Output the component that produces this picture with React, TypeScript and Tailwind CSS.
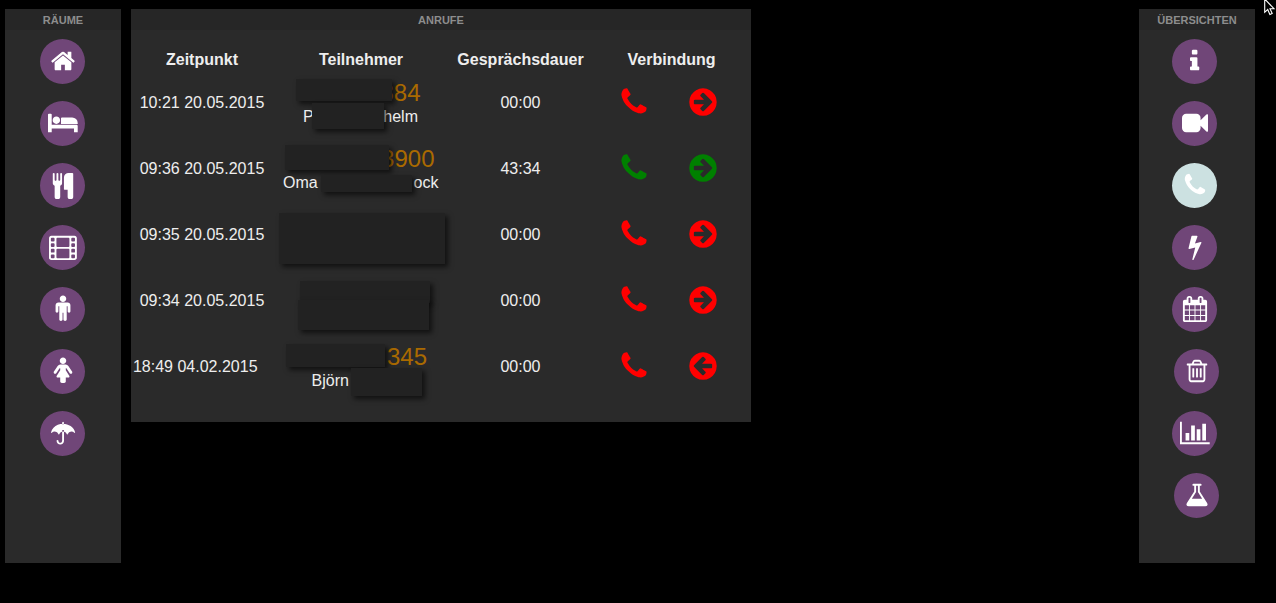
import React from "react";

type Glyph = { w: number; d: string };

const GLYPHS: Record<string, Glyph> = {
  home: { w: 1792, d: "M1472 992v480q0 26-19 45t-45 19h-384v-384h-256v384h-384q-26 0-45-19t-19-45v-480q0-1 .5-3t.5-3l575-474 575 474q1 2 1 6zm223-69l-62 74q-8 9-21 11h-3q-13 0-21-7l-692-577-692 577q-12 8-24 7-13-2-21-11l-62-74q-8-10-7-23.5t11-21.5l719-599q32-26 76-26t76 26l244 204v-195q0-14 9-23t23-9h192q14 0 23 9t9 23v408l219 182q10 8 11 21.5t-7 23.5z" },
  bed: { w: 2048, d: "M256 1024h1728q26 0 45 19t19 45v448h-256v-256h-1536v256h-256v-1216q0-26 19-45t45-19h128q26 0 45 19t19 45v704zm576-320q0-106-75-181t-181-75-181 75-75 181 75 181 181 75 181-75 75-181zm1216 256v-64q0-159-112.5-271.5t-271.5-112.5h-704q-26 0-45 19t-19 45v384h1152z" },
  cutlery: { w: 1792, d: "M832 128v640q0 61-35.5 111t-92.5 70v779q0 52-38 90t-90 38h-128q-52 0-90-38t-38-90v-779q-57-20-92.5-70t-35.5-111v-640q0-26 19-45t45-19 45 19 19 45v416q0 26 19 45t45 19 45-19 19-45v-416q0-26 19-45t45-19 45 19 19 45v416q0 26 19 45t45 19 45-19 19-45v-416q0-26 19-45t45-19 45 19 19 45zm768 0v1600q0 52-38 90t-90 38h-128q-52 0-90-38t-38-90v-512h-224q-13 0-22.5-9.5t-9.5-22.5v-800q0-132 94-226t226-94h256q26 0 45 19t19 45z" },
  film: { w: 1920, d: "M160 128h1600q66 0 113 47t47 113v1344q0 66-47 113t-113 47h-1600q-66 0-113-47t-47-113v-1344q0-66 47-113t113-47z M192 256q-64 0-64 64v128q0 64 64 64h128q64 0 64-64v-128q0-64-64-64z M192 640q-64 0-64 64v128q0 64 64 64h128q64 0 64-64v-128q0-64-64-64z M192 1024q-64 0-64 64v128q0 64 64 64h128q64 0 64-64v-128q0-64-64-64z M192 1408q-64 0-64 64v128q0 64 64 64h128q64 0 64-64v-128q0-64-64-64z M1600 256q-64 0-64 64v128q0 64 64 64h128q64 0 64-64v-128q0-64-64-64z M1600 640q-64 0-64 64v128q0 64 64 64h128q64 0 64-64v-128q0-64-64-64z M1600 1024q-64 0-64 64v128q0 64 64 64h128q64 0 64-64v-128q0-64-64-64z M1600 1408q-64 0-64 64v128q0 64 64 64h128q64 0 64-64v-128q0-64-64-64z M576 256q-64 0-64 64v512q0 64 64 64h768q64 0 64-64v-512q0-64-64-64z M576 1024q-64 0-64 64v512q0 64 64 64h768q64 0 64-64v-512q0-64-64-64z" },
  male: { w: 1792, d: "M1408 640v416q0 40-28 68t-68 28-68-28-28-68v-352h-64v912q0 46-33 79t-79 33-79-33-33-79v-464h-64v464q0 46-33 79t-79 33-79-33-33-79v-912h-64v352q0 40-28 68t-68 28-68-28-28-68v-416q0-80 56-136t136-56h640q80 0 136 56t56 136zm-288-448q0 93-65.5 158.5t-158.5 65.5-158.5-65.5-65.5-158.5 65.5-158.5 158.5-65.5 158.5 65.5 65.5 158.5z" },
  female: { w: 1792, d: "M1536 992q0 40-28 68t-68 28q-51 0-80-43l-227-341h-45v132l247 411q9 15 9 33 0 26-19 45t-45 19h-192v272q0 46-33 79t-79 33h-160q-46 0-79-33t-33-79v-272h-192q-26 0-45-19t-19-45q0-18 9-33l247-411v-132h-45l-227 341q-29 43-80 43-40 0-68-28t-28-68q0-29 16-53l256-384q73-107 176-107h384q103 0 176 107l256 384q16 24 16 53zm-416-800q0 93-65.5 158.5t-158.5 65.5-158.5-65.5-65.5-158.5 65.5-158.5 158.5-65.5 158.5 65.5 65.5 158.5z" },
  umbrella: { w: 1664, d: "M896 708v728q0 104-76 180t-180 76-180-76-76-180q0-26 19-45t45-19 45 19 19 45q0 50 39 89t89 39 89-39 39-89v-728q33-12 64-12t64 12zM1664 861q0 13-9.5 22.5t-22.5 9.5q-11 0-23-10-49-46-93-69t-102-23q-68 0-128 37t-103 97q-7 10-17.5 28t-14.5 24q-11 17-28 17-18 0-29-17-4-6-14.5-24t-17.5-28q-43-60-102.5-97t-127.5-37-127.5 37-102.5 97q-7 10-17.5 28t-14.5 24q-11 17-29 17-17 0-28-17-4-6-14.5-24t-17.5-28q-43-60-103-97t-128-37q-58 0-102 23t-93 69q-12 10-23 10-13 0-22.5-9.5t-9.5-22.5q0-5 1-7 45-183 172.5-319.5t298-204.5 360.5-68q140 0 274.5 40t246.5 113.5 194.5 187 115.5 251.5q1 2 1 7zM896 192v98q-42-2-64-2t-64 2v-98q0-26 19-45t45-19 45 19 19 45z" },
  info: { w: 640, d: "M640 1344v128q0 26-19 45t-45 19h-512q-26 0-45-19t-19-45v-128q0-26 19-45t45-19h64v-384h-64q-26 0-45-19t-19-45v-128q0-26 19-45t45-19h384q26 0 45 19t19 45v576h64q26 0 45 19t19 45zm-128-1152v192q0 26-19 45t-45 19h-256q-26 0-45-19t-19-45v-192q0-26 19-45t45-19h256q26 0 45 19t19 45z" },
  video: { w: 1792, d: "M1792 352v1088q0 42-39 59-13 5-25 5-27 0-45-19l-403-403v166q0 119-84.5 203.5t-203.5 84.5h-704q-119 0-203.5-84.5t-84.5-203.5v-704q0-119 84.5-203.5t203.5-84.5h704q119 0 203.5 84.5t84.5 203.5v165l403-402q18-19 45-19 12 0 25 5 39 17 39 59z" },
  phone: { w: 1792, d: "M1600 1240q0 27-10 70.5t-21 68.5q-21 50-122 106-94 51-186 51-27 0-52.5-3.5t-57.5-12.5-47.5-14.5-55.5-20.5-49-18q-98-35-175-83-128-79-264.5-215.5t-215.5-264.5q-48-77-83-175-3-9-18-49t-20.5-55.5-14.5-47.5-12.5-57.5-3.5-52.5q0-92 51-186 56-101 106-122 25-11 68.5-21t70.5-10q14 0 21 3 18 6 53 76 11 19 30 54t35 63.5 31 53.5q3 4 17.5 25t21.5 35.5 7 28.5q0 20-28.5 50t-62 55-62 53-28.5 46q0 9 5 22.5t8.5 20.5 14 24 11.5 19q76 137 174 235t235 174q2 1 19 11.5t24 14 20.5 8.5 22.5 5q18 0 46-28.5t53-62 55-62 50-28.5q14 0 28.5 7t35.5 21.5 25 17.5q25 15 53.5 31t63.5 35 54 30q70 35 76 53 3 7 3 21z" },
  bolt: { w: 1792, d: "M1333 566q18 20 7 44l-540 1157q-13 25-42 25-4 0-14-2-17-5-25.5-19t-4.5-30l197-808-406 101q-4 1-12 1-18 0-31-11-18-15-13-39l201-825q4-14 16-23t28-9h328q19 0 32 12.5t13 29.5q0 8-5 18l-171 463 396-98q8-2 12-2 19 0 34 15z" },
  calendar: { w: 1792, d: "M192 1664h288v-288h-288v288zm352 0h320v-288h-320v288zm-352-352h288v-320h-288v320zm352 0h320v-320h-320v320zm-352-384h288v-288h-288v288zm736 736h320v-288h-320v288zm-384-736h320v-288h-320v288zm768 736h288v-288h-288v288zm-384-352h320v-320h-320v320zm-352-864v-288q0-13-9.5-22.5t-22.5-9.5h-64q-13 0-22.5 9.5t-9.5 22.5v288q0 13 9.5 22.5t22.5 9.5h64q13 0 22.5-9.5t9.5-22.5zm736 864h288v-320h-288v320zm-384-384h320v-288h-320v288zm384 0h288v-288h-288v288zm32-480v-288q0-13-9.5-22.5t-22.5-9.5h-64q-13 0-22.5 9.5t-9.5 22.5v288q0 13 9.5 22.5t22.5 9.5h64q13 0 22.5-9.5t9.5-22.5zm384-64v1280q0 52-38 90t-90 38h-1408q-52 0-90-38t-38-90v-1280q0-52 38-90t90-38h128v-96q0-66 47-113t113-47h64q66 0 113 47t47 113v96h384v-96q0-66 47-113t113-47h64q66 0 113 47t47 113v96h128q52 0 90 38t38 90z" },
  trash: { w: 1792, d: "M704 736v576q0 14-9 23t-23 9h-64q-14 0-23-9t-9-23v-576q0-14 9-23t23-9h64q14 0 23 9t9 23zm256 0v576q0 14-9 23t-23 9h-64q-14 0-23-9t-9-23v-576q0-14 9-23t23-9h64q14 0 23 9t9 23zm256 0v576q0 14-9 23t-23 9h-64q-14 0-23-9t-9-23v-576q0-14 9-23t23-9h64q14 0 23 9t9 23zm128 724v-948h-896v948q0 22 7 40.5t14.5 27 10.5 8.5h832q3 0 10.5-8.5t14.5-27 7-40.5zm-672-1076h448l-48-117q-7-9-17-11h-317q-10 2-17 11zm928 32v64q0 14-9 23t-23 9h-96v948q0 83-47 143.5t-113 60.5h-832q-66 0-113-58.5t-47-141.5v-952h-96q-14 0-23-9t-9-23v-64q0-14 9-23t23-9h309l70-167q15-37 54-63t79-26h320q40 0 79 26t54 63l70 167h309q14 0 23 9t9 23z" },
  chart: { w: 2048, d: "M640 896v512h-256v-512h256zm384-512v1024h-256v-1024h256zm1024 1152v128h-2048v-1536h128v1408h1920zm-640-896v768h-256v-768h256zm384-384v1152h-256v-1152h256z" },
  flask: { w: 1792, d: "M1591 1448q56 89 21.5 152.5t-140.5 63.5h-1152q-106 0-140.5-63.5t21.5-152.5l503-793v-399h-64q-26 0-45-19t-19-45 19-45 45-19h512q26 0 45 19t19 45-19 45-45 19h-64v399zm-779-725l-272 429h712l-272-429-20-31v-436h-128v436z" },
  arrow: { w: 1792, d: "M1413 896q0-27-18-45l-91-91-362-362q-18-18-45-18t-45 18l-91 91q-18 18-18 45t18 45l189 189h-502q-26 0-45 19t-19 45v128q0 26 19 45t45 19h502l-189 189q-19 19-19 45t19 45l91 91q18 18 45 18t45-18l362-362 91-91q18-18 18-45zm251 0q0 209-103 385.5t-279.5 279.5-385.5 103-385.5-103-279.5-279.5-103-385.5 103-385.5 279.5-279.5 385.5-103 385.5 103 279.5 279.5 103 385.5z" },
};

function Icon({ name, className = "" }: { name: string; className?: string }) {
  const g = GLYPHS[name];
  return (
    <svg viewBox={`0 0 ${g.w} 1792`} className={`shrink-0 overflow-visible ${className}`} fill="currentColor" fillRule="evenodd" aria-hidden="true">
      <path d={g.d} />
    </svg>
  );
}

type NavItem = { icon: string; active?: boolean; narrow?: boolean };

function Sidebar({ title, items, pad }: { title: string; items: NavItem[]; pad: string }) {
  return (
    <section className="h-[554px] w-[116px] bg-[#2a2a2a]">
      <h2 className="h-[21px] bg-[#262626] text-center text-[11px] leading-[22px] font-bold text-[#8d8d8d]">{title}</h2>
      <ul className={`flex flex-col gap-[17.5px] pt-[9px] ${pad}`}>
        {items.map((it) => (
          <li
            key={it.icon}
            className={`flex h-[44.5px] w-[44.5px] items-start justify-center rounded-full pt-[9px] text-white ${it.active ? "bg-[#cce1e1]" : "bg-[#704678]"} ${it.narrow ? "ml-[2px]" : ""}`}
          >
            <Icon name={it.icon} className="ml-[1px] h-[26px] w-auto" />
          </li>
        ))}
      </ul>
    </section>
  );
}

type Call = {
  time: string;
  duration: string;
  ok?: boolean;
  incoming?: boolean;
  shift?: boolean;
  number?: string;
  numberBox?: string;
  name?: [string, string];
  nameBox?: string;
  masks: string[];
};

const CALLS: Call[] = [
  { time: "10:21 20.05.2015", duration: "00:00", number: "384", numberBox: "pr-[28.5px]", name: ["P", "helm"], nameBox: "pl-[30px] pr-[31px]", masks: ["left-[23px] top-[10px] h-[22px] w-[96px]", "left-[39px] top-[34px] h-[26px] w-[72px]"] },
  { time: "09:36 20.05.2015", duration: "43:34", ok: true, number: "3900", numberBox: "pr-[14.5px]", name: ["Oma", "ock"], nameBox: "pl-[10px] pr-[10.5px]", masks: ["left-[12px] top-[10px] h-[25px] w-[104px]", "left-[48px] top-[40px] h-[17px] w-[91px]"] },
  { time: "09:35 20.05.2015", duration: "00:00", masks: ["left-[6px] top-[12px] h-[51px] w-[166px]"] },
  { time: "09:34 20.05.2015", duration: "00:00", masks: ["left-[27px] top-[14px] h-[22px] w-[130px]", "left-[25px] top-[33px] h-[30px] w-[131px]"] },
  { time: "18:49 04.02.2015", duration: "00:00", incoming: true, shift: true, number: "345", numberBox: "pr-[22px]", name: ["Björn", ""], nameBox: "pl-[38.5px]", masks: ["left-[13px] top-[11px] h-[23px] w-[99px]", "left-[78px] top-[35px] h-[28px] w-[71px]"] },
];

function CallRow({ call }: { call: Call }) {
  return (
    <div className="grid h-[66px] grid-cols-[142px_176px_143px_159px]">
      <div className={`pt-[25px] text-center leading-[18px] ${call.shift ? "pr-[13.5px]" : ""}`}>{call.time}</div>
      <div className="relative">
        {call.number && (
          <div className={`pt-[10px] text-right text-[24px] leading-[28px] text-[#aa6a00] ${call.numberBox}`}>{call.number}</div>
        )}
        {call.name && (
          <div className={`mt-px flex justify-between leading-[18px] ${call.nameBox}`}>
            <span>{call.name[0]}</span>
            <span>{call.name[1]}</span>
          </div>
        )}
        {call.masks.map((m) => (
          <div key={m} className={`absolute bg-[#222222] shadow-[3px_3px_5px_rgba(0,0,0,0.6)] ${m}`} />
        ))}
      </div>
      <div className="pt-[25px] text-center leading-[18px]">{call.duration}</div>
      <div className={`flex gap-[37px] pt-[17px] pl-[26px] ${call.ok ? "text-[#008000]" : "text-[#ff0000]"}`}>
        <Icon name="phone" className="h-[32px] w-[32px]" />
        <Icon name="arrow" className={`-mt-[0.4px] h-[32px] w-[32px] ${call.incoming ? "-scale-x-100" : ""}`} />
      </div>
    </div>
  );
}

const ROOMS: NavItem[] = [{ icon: "home" }, { icon: "bed" }, { icon: "cutlery" }, { icon: "film" }, { icon: "male" }, { icon: "female" }, { icon: "umbrella" }];
const VIEWS: NavItem[] = [
  { icon: "info" },
  { icon: "video" },
  { icon: "phone", active: true },
  { icon: "bolt" },
  { icon: "calendar" },
  { icon: "trash", narrow: true },
  { icon: "chart" },
  { icon: "flask", narrow: true },
];

export default function App() {
  return (
    <div className="relative flex h-[603px] w-[1276px] items-start overflow-hidden bg-black pt-[9px] pl-[5px] font-['Liberation_Sans',Arial,sans-serif] text-[16px] text-[#eeeeee]">
      <Sidebar title="RÄUME" items={ROOMS} pad="pl-[35px]" />
      <main className="ml-[10px] h-[413px] w-[620px] bg-[#2a2a2a]">
        <h2 className="h-[21px] bg-[#262626] text-center text-[11px] leading-[22px] font-bold text-[#8d8d8d]">ANRUFE</h2>
        <div className="grid h-[39px] grid-cols-[142px_176px_143px_159px] pt-[21px] text-center leading-[18px] font-bold">
          <span>Zeitpunkt</span>
          <span>Teilnehmer</span>
          <span>Gesprächsdauer</span>
          <span>Verbindung</span>
        </div>
        {CALLS.map((c) => (
          <CallRow key={c.time} call={c} />
        ))}
      </main>
      <div className="ml-[388px]">
        <Sidebar title="ÜBERSICHTEN" items={VIEWS} pad="pl-[33px]" />
      </div>
      <svg className="absolute top-0 left-[1264px] h-[16px] w-[12px]" viewBox="0 0 12 16" aria-hidden="true">
        <path d="M.7-1v13.3l3-2.8 2.2 5 2.3-1-2.2-4.8h4z" fill="#000" stroke="#fff" strokeWidth="1.1" />
      </svg>
    </div>
  );
}
